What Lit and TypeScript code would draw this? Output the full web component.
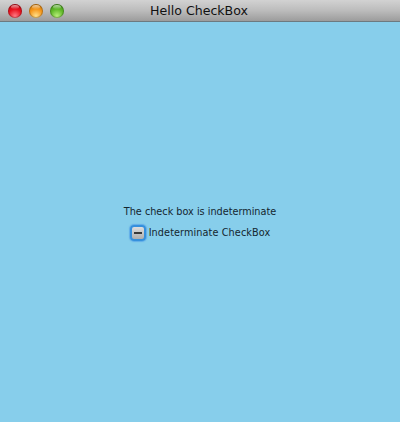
import { LitElement, html, css } from "lit";
import { customElement } from "lit/decorators.js";

@customElement("app-root")
export class AppRoot extends LitElement {
  static styles = css`
    :host { display: block; width: 400px; height: 422px; }
    .win { width: 400px; height: 422px; display: flex; flex-direction: column; background: #87ceeb; }
    .bar {
      position: relative; height: 22px; box-sizing: border-box; flex: none;
      display: flex; align-items: center; justify-content: center; padding-right: 2px;
      background: linear-gradient(#d2d2d2, #bcbcbc 50%, #9c9c9c);
      border-bottom: 1px solid #6d7a80;
      font: 12.6px "DejaVu Sans", sans-serif; color: #111;
    }
    .lights { position: absolute; left: 8px; top: 4px; display: flex; gap: 7px; }
    .light { position: relative; width: 14px; height: 14px; border-radius: 50%; box-shadow: inset 0 0 0 1px rgba(0,0,0,.22); }
    .light::after {
      content: ""; position: absolute; left: 3px; top: 1px; width: 8px; height: 4px; border-radius: 50%;
      background: linear-gradient(rgba(255,255,255,.6), rgba(255,255,255,.05));
    }
    .r { background: radial-gradient(circle at 50% 85%, #ff7a84, #e8101c 50%, #a50f16); }
    .o { background: radial-gradient(circle at 50% 85%, #ffe08a, #f5961a 50%, #b8700e); }
    .g { background: radial-gradient(circle at 50% 85%, #b8ee7a, #5fb828 50%, #3f8a1c); }
    .body {
      flex: 1; display: flex; flex-direction: column; align-items: center; justify-content: center;
      gap: 7px; font: 9.7px "DejaVu Sans", sans-serif; color: #14262f; padding-top: 3px;
    }
    .row { display: flex; align-items: center; gap: 3px; }
    .text { line-height: 12px; }
    .label { letter-spacing: .1px; }
    .box {
      width: 16px; height: 16px; box-sizing: border-box; border-radius: 4px;
      display: flex; align-items: center; justify-content: center;
      background: linear-gradient(#dedede, #aeaeae);
      border: 2px solid #3590dd; box-shadow: 0 0 1px 1px rgba(60,140,230,.5);
    }
    .dash { width: 8px; height: 2px; background: #3a3a3a; }
  `;
  render() {
    return html`<div class="win">
      <div class="bar">
        <div class="lights"><div class="light r"></div><div class="light o"></div><div class="light g"></div></div>
        Hello CheckBox
      </div>
      <div class="body">
        <div class="text">The check box is indeterminate</div>
        <div class="row"><div class="box"><div class="dash"></div></div><div class="text label">Indeterminate CheckBox</div></div>
      </div>
    </div>`;
  }
}
